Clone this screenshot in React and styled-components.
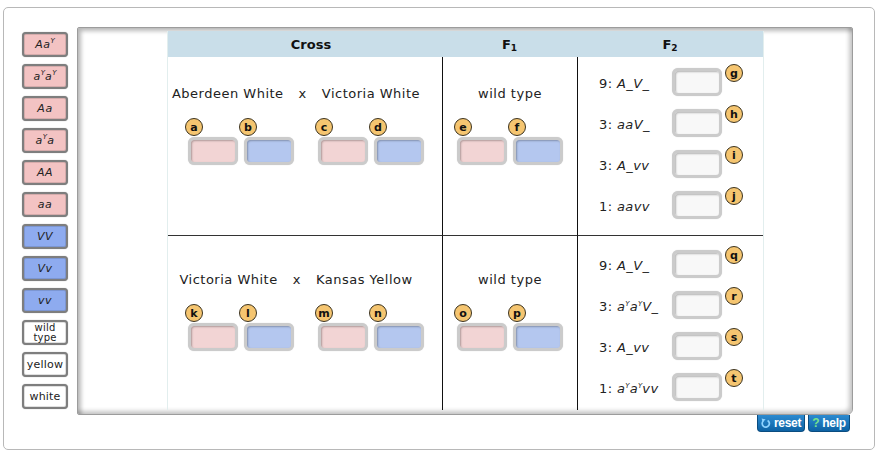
import React from 'react';
import styled, { createGlobalStyle } from 'styled-components';

const Global = createGlobalStyle`
  html, body { margin: 0; padding: 0; background: #fff; }
  body { font-family: "DejaVu Sans", Verdana, sans-serif; color: #222; }
`;

const Frame = styled.div`
  box-sizing: border-box;
  margin: 7px 0 0 3px;
  width: 872px;
  height: 443px;
  border: 1px solid #b8b8b8;
  border-radius: 5px;
  display: flex;
  align-items: flex-start;
  padding: 19px 0 0 18px;
  gap: 9px;
`;

const Palette = styled.div`
  display: flex;
  flex-direction: column;
  gap: 7px;
  margin-top: 5px;
  width: 46px;
`;

const tileFill = { pink: '#f3c3c3', blue: '#8eabef', plain: '#ffffff' };

const Tile = styled.div`
  box-sizing: border-box;
  width: 46px;
  height: 25px;
  border: 2px solid #7e7e7e;
  border-radius: 4px;
  background: ${p => tileFill[p.$tone]};
  box-shadow: inset 0 0 0 1px rgba(0, 0, 0, 0.12), 0 0 1px rgba(0, 0, 0, 0.4);
  display: flex;
  align-items: center;
  justify-content: center;
  text-align: center;
  font-size: ${p => (p.$small ? '10px' : '11px')};
  line-height: ${p => (p.$small ? '10px' : '13px')};
  font-style: ${p => (p.$italic ? 'italic' : 'normal')};
  letter-spacing: ${p => (p.$italic ? '0.6px' : '0.2px')};
  color: #222;
`;

const TileText = styled.span`
  display: block;
`;

const Sup = styled.sup`
  font-size: 7px;
  line-height: 0;
  vertical-align: 5px;
  font-style: italic;
  letter-spacing: 0;
`;

const Main = styled.div`
  display: flex;
  flex-direction: column;
`;

const Panel = styled.div`
  box-sizing: border-box;
  width: 776px;
  height: 388px;
  border: 1px solid #9c9c9c;
  border-radius: 2px 2px 6px 2px;
  background: #fff;
  box-shadow: inset 3px 3px 4px rgba(0, 0, 0, 0.28), inset -3px -3px 4px rgba(0, 0, 0, 0.22);
  padding: 3px 0 0 89px;
`;

const Table = styled.div`
  display: grid;
  grid-template-columns: 274px 135px 186px;
  grid-template-rows: 26px 178px 175px;
  border-left: 1px solid #e2eeee;
  border-right: 1px solid #e2eeee;
  width: 595px;
`;

const HeadCell = styled.div`
  background: #c9dee9;
  display: flex;
  align-items: center;
  justify-content: center;
  padding-left: ${p => p.$shift || 0}px;
  font-weight: bold;
  font-size: 13px;
  color: #111;
`;

const HeadText = styled.span`
  white-space: nowrap;
`;

const Sub = styled.sub`
  font-size: 9px;
  vertical-align: -2px;
  line-height: 0;
`;

const BodyCell = styled.div`
  box-sizing: border-box;
  display: flex;
  flex-direction: column;
  padding-top: ${p => p.$top}px;
  ${p => (p.$rule ? 'border-left: 1px solid #111;' : '')}
  ${p => (p.$divider ? 'border-top: 1px solid #333;' : '')}
`;

const Parents = styled.div`
  display: flex;
  justify-content: center;
  gap: 15px;
  padding-right: ${p => p.$right || 0}px;
  font-size: 13px;
  line-height: 16px;
  letter-spacing: 0.5px;
  color: #222;
  white-space: nowrap;
`;

const SlotRow = styled.div`
  display: flex;
  gap: ${p => p.$gap}px;
  justify-content: ${p => (p.$center ? 'center' : 'flex-start')};
  padding-left: ${p => p.$left || 0}px;
  margin-top: 16px;
`;

const Pair = styled.div`
  display: flex;
  gap: 6px;
`;

const Slot = styled.div`
  display: flex;
  flex-direction: column;
  align-items: flex-start;
  gap: 1px;
`;

const Badge = styled.div`
  box-sizing: border-box;
  width: 18px;
  height: 18px;
  border-radius: 50%;
  background: #f5c570;
  border: 1px solid #3b3320;
  display: flex;
  align-items: center;
  justify-content: center;
  font-weight: bold;
  font-size: 11px;
  line-height: 1;
  color: #111;
  margin-left: ${p => p.$ml || 0}px;
  margin-top: ${p => p.$mt || 0}px;
  align-self: ${p => p.$self || 'auto'};
  flex-shrink: 0;
`;

const boxFill = { pink: '#f2d4d4', blue: '#b4c7ef', plain: '#f8f8f8' };

const DropBox = styled.div`
  box-sizing: border-box;
  width: 50px;
  height: 28px;
  border: 3px solid #cbcbcb;
  border-radius: 6px;
  background: ${p => boxFill[p.$tone]};
  box-shadow: inset 1px 1px 2px rgba(0, 0, 0, 0.28), 0 0 1px rgba(0, 0, 0, 0.2);
  flex-shrink: 0;
`;

const Ratios = styled.div`
  display: flex;
  flex-direction: column;
  gap: 13px;
  padding-left: 21px;
`;

const RatioRow = styled.div`
  display: flex;
  align-items: center;
`;

const RatioLabel = styled.div`
  width: 73px;
  font-size: 13px;
  line-height: 16px;
  letter-spacing: 0.4px;
  padding-top: 3px;
  color: #222;
  white-space: nowrap;
`;

const Geno = styled.span`
  font-style: italic;
`;

const Tools = styled.div`
  display: flex;
  justify-content: flex-end;
  gap: 3px;
  padding-right: 3px;
`;

const ToolButton = styled.div`
  box-sizing: border-box;
  width: ${p => p.$w}px;
  height: 17px;
  background: linear-gradient(#2c8ad0, #0d62a4);
  border: 1px solid #0a4c80;
  border-top: none;
  border-radius: 0 0 4px 4px;
  color: #fff;
  font-family: "Liberation Sans", Arial, sans-serif;
  font-weight: bold;
  font-size: 12px;
  letter-spacing: -0.3px;
  display: flex;
  align-items: center;
  justify-content: center;
  gap: 3px;
`;

const HelpMark = styled.span`
  color: #79e28a;
  font-size: 12px;
  font-weight: bold;
`;

const Y = () => <Sup>Y</Sup>;

const ResetIcon = () => (
  <svg width="10" height="11" viewBox="0 0 10 11">
    <path d="M6.6 2.4 A3.6 3.6 0 1 1 2.2 3" fill="none" stroke="#8fd3ff" strokeWidth="1.7" />
    <path d="M0.6 0.6 L4.6 1.2 L1.6 4.4 Z" fill="#8fd3ff" />
  </svg>
);

const paletteItems = [
  { tone: 'pink', italic: true, content: <>Aa<Y /></> },
  { tone: 'pink', italic: true, content: <>a<Y />a<Y /></> },
  { tone: 'pink', italic: true, content: <>Aa</> },
  { tone: 'pink', italic: true, content: <>a<Y />a</> },
  { tone: 'pink', italic: true, content: <>AA</> },
  { tone: 'pink', italic: true, content: <>aa</> },
  { tone: 'blue', italic: true, content: <>VV</> },
  { tone: 'blue', italic: true, content: <>Vv</> },
  { tone: 'blue', italic: true, content: <>vv</> },
  { tone: 'plain', small: true, content: <>wild<br />type</> },
  { tone: 'plain', content: <>yellow</> },
  { tone: 'plain', content: <>white</> },
];

const SlotPair = ({ letters }) => (
  <Pair>
    <Slot>
      <Badge $ml={-3}>{letters[0]}</Badge>
      <DropBox $tone="pink" />
    </Slot>
    <Slot>
      <Badge $ml={-5}>{letters[1]}</Badge>
      <DropBox $tone="blue" />
    </Slot>
  </Pair>
);

const Ratio = ({ n, geno, letter }) => (
  <RatioRow>
    <RatioLabel>
      {n}: <Geno>{geno}</Geno>
    </RatioLabel>
    <DropBox $tone="plain" />
    <Badge $ml={3} $mt={-4} $self="flex-start">{letter}</Badge>
  </RatioRow>
);

const crosses = [
  {
    left: 'Aberdeen White',
    right: 'Victoria White',
    top: 29,
    ratioTop: 11,
    letters: ['a', 'b', 'c', 'd', 'e', 'f'],
    ratios: [
      { n: 9, geno: 'A_V_', letter: 'g' },
      { n: 3, geno: 'aaV_', letter: 'h' },
      { n: 3, geno: 'A_vv', letter: 'i' },
      { n: 1, geno: 'aavv', letter: 'j' },
    ],
  },
  {
    left: 'Victoria White',
    right: 'Kansas Yellow',
    top: 36,
    ratioTop: 14,
    divider: true,
    letters: ['k', 'l', 'm', 'n', 'o', 'p'],
    ratios: [
      { n: 9, geno: 'A_V_', letter: 'q' },
      { n: 3, geno: <>a<Y />a<Y />V_</>, letter: 'r' },
      { n: 3, geno: 'A_vv', letter: 's' },
      { n: 1, geno: <>a<Y />a<Y />vv</>, letter: 't' },
    ],
  },
];

export default function App() {
  return (
    <>
      <Global />
      <Frame>
        <Palette>
          {paletteItems.map((t, i) => (
            <Tile key={i} $tone={t.tone} $italic={t.italic} $small={t.small}>
              <TileText>{t.content}</TileText>
            </Tile>
          ))}
        </Palette>
        <Main>
          <Panel>
            <Table>
              <HeadCell $shift={12}><HeadText>Cross</HeadText></HeadCell>
              <HeadCell><HeadText>F<Sub>1</Sub></HeadText></HeadCell>
              <HeadCell><HeadText>F<Sub>2</Sub></HeadText></HeadCell>
              {crosses.map((c, i) => (
                <React.Fragment key={i}>
                  <BodyCell $top={c.top} $divider={c.divider}>
                    <Parents $right={18}>
                      <span>{c.left}</span>
                      <span>x</span>
                      <span>{c.right}</span>
                    </Parents>
                    <SlotRow $gap={24} $left={20}>
                      <SlotPair letters={[c.letters[0], c.letters[1]]} />
                      <SlotPair letters={[c.letters[2], c.letters[3]]} />
                    </SlotRow>
                  </BodyCell>
                  <BodyCell $top={c.top} $rule $divider={c.divider}>
                    <Parents>wild type</Parents>
                    <SlotRow $gap={6} $center>
                      <SlotPair letters={[c.letters[4], c.letters[5]]} />
                    </SlotRow>
                  </BodyCell>
                  <BodyCell $top={c.ratioTop} $rule $divider={c.divider}>
                    <Ratios>
                      {c.ratios.map((r, j) => (
                        <Ratio key={j} {...r} />
                      ))}
                    </Ratios>
                  </BodyCell>
                </React.Fragment>
              ))}
            </Table>
          </Panel>
          <Tools>
            <ToolButton $w={48}>
              <ResetIcon />
              reset
            </ToolButton>
            <ToolButton $w={42}>
              <HelpMark>?</HelpMark>
              help
            </ToolButton>
          </Tools>
        </Main>
      </Frame>
    </>
  );
}
